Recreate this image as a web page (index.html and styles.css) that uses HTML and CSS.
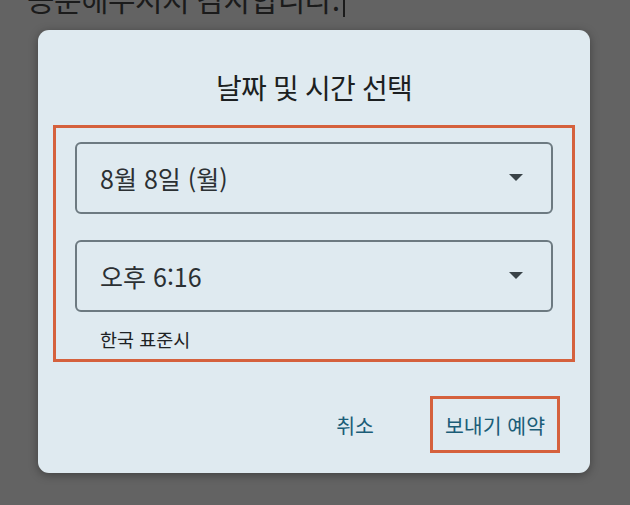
FILE: index.html
```html
<!DOCTYPE html>
<html lang="ko">
<head>
    <meta charset="UTF-8">
    <title>보내기 예약</title>
    <link rel="stylesheet" href="styles.css">
</head>
<body>
    <p class="page-text">공문해주시지 감사합니다.<span class="caret"></span></p>

    <div class="dialog">
        <h1 class="dialog-title">날짜 및 시간 선택</h1>

        <div class="picker-group">
            <div class="picker">
                <span class="picker-value">8월 8일 (월)</span>
                <svg class="picker-arrow" width="14" height="8" viewBox="0 0 14 8"><path d="M0 0h14L7 7z" fill="#394247"/></svg>
            </div>
            <div class="picker">
                <span class="picker-value">오후 6:16</span>
                <svg class="picker-arrow" width="14" height="8" viewBox="0 0 14 8"><path d="M0 0h14L7 7z" fill="#394247"/></svg>
            </div>
            <div class="timezone">한국 표준시</div>
        </div>

        <div class="actions">
            <button class="text-button">취소</button>
            <button class="text-button highlighted">보내기 예약</button>
        </div>
    </div>
</body>
</html>
```

FILE: styles.css
```css
body {
    margin: 0;
    padding: 0;
    background: #636363;
    font-family: "Noto Sans CJK KR", "Noto Sans", sans-serif;
    height: 505px;
    overflow: hidden;
    position: relative;
}

.page-text {
    margin: -17px 0 0 27px;
    font-size: 30px;
    line-height: 1;
    letter-spacing: -0.6px;
    color: #1b1b1b;
    white-space: nowrap;
}

.caret {
    display: inline-block;
    width: 2px;
    height: 34px;
    background: #1b1b1b;
    vertical-align: top;
    margin-left: 3px;
}

.dialog {
    position: absolute;
    left: 38px;
    top: 30px;
    width: 552px;
    height: 443px;
    box-sizing: border-box;
    background: #dfeaf0;
    border-radius: 11px;
    box-shadow: 0 2px 10px rgba(0, 0, 0, 0.35);
    padding: 40px 30px 0 15px;
    display: flex;
    flex-direction: column;
}

.dialog-title {
    margin: 0 0 21px 15px;
    height: 34px;
    font-size: 28px;
    line-height: 34px;
    font-weight: 400;
    letter-spacing: -0.8px;
    text-align: center;
    color: #1c1f21;
}

.picker-group {
    border: 3px solid #d5613d;
    padding: 14px 19px 0;
    height: 237px;
    box-sizing: border-box;
    margin-right: -15px;
    display: flex;
    flex-direction: column;
    gap: 26px;
}

.picker {
    height: 72px;
    box-sizing: border-box;
    border: 2px solid #6d7a81;
    border-radius: 6px;
    display: flex;
    align-items: center;
    justify-content: space-between;
    padding: 0 28px 0 23px;
}

.picker-value {
    font-size: 25px;
    color: #2b3033;
}

.picker-arrow {
    display: block;
}

.timezone {
    margin: -12px 0 0 25px;
    font-size: 18.5px;
    line-height: 26px;
    color: #1e2224;
}

.actions {
    display: flex;
    justify-content: flex-end;
    align-items: center;
    gap: 41px;
    margin-top: 34px;
}

.text-button {
    height: 57px;
    padding: 0 12px;
    border: 3px solid transparent;
    background: none;
    font-family: inherit;
    font-size: 20.5px;
    font-weight: 400;
    color: #1b5d78;
    cursor: pointer;
}

.highlighted {
    border-color: #d5613d;
}
```
